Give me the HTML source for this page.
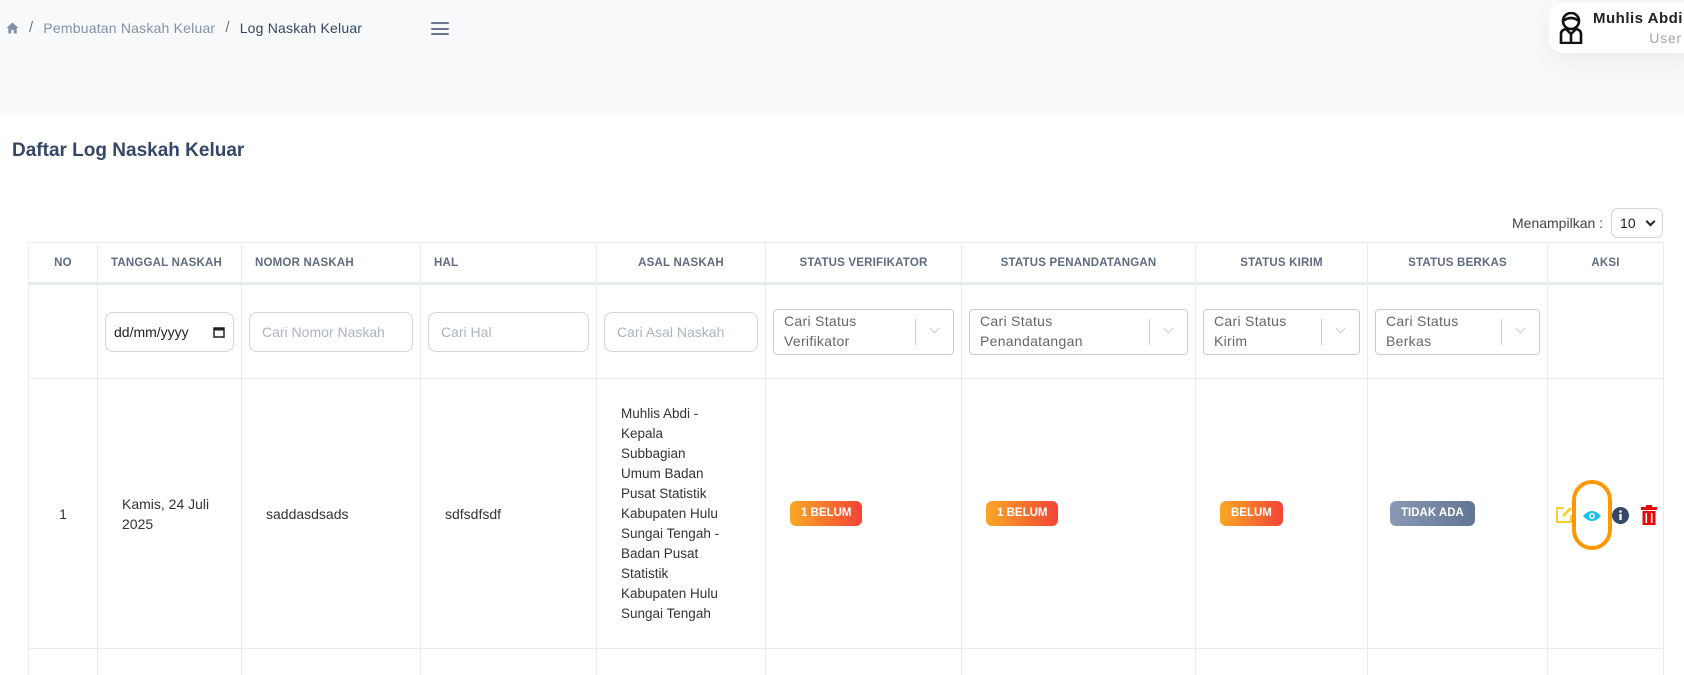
<!DOCTYPE html>
<html><head><meta charset="utf-8"><style>
*{box-sizing:border-box;margin:0;padding:0}
html,body{width:1684px;height:675px;overflow:hidden}
body{background:#fff;font-family:"Liberation Sans",sans-serif;position:relative;color:#344767}
.top{position:absolute;left:0;top:0;width:1684px;height:113px;background:#f8f9fa}
.bc{position:absolute;top:19px;left:6px;font-size:14px;color:#8392ab;display:flex;align-items:center;letter-spacing:.2px}
.bc .sep{margin:0 10px;color:#6c757d;font-size:15px}
.bc .cur{color:#344767}
.ham{position:absolute;left:431px;top:22px;width:18px}
.ham i{display:block;height:2px;background:#67748e;margin-bottom:3.5px;border-radius:1px}
.user{position:absolute;left:1549px;top:3px;width:150px;height:50px;background:#fff;border-radius:14px;box-shadow:0 8px 24px rgba(0,0,0,.06)}
.user .n{position:absolute;left:44px;top:7px;font-size:15px;font-weight:bold;color:#222;letter-spacing:.5px}
.user .r{position:absolute;right:17px;top:27px;font-size:14px;color:#a0a6b1;letter-spacing:.8px}
h2{position:absolute;left:12px;top:140px;font-size:19px;font-weight:bold;color:#344767}
.show{position:absolute;top:208px;left:1512px;font-size:14px;color:#444;display:flex;align-items:center}
.show .sel{margin-left:8px;width:52px;height:30px;border:1px solid #d2d6da;border-radius:7px;padding:6px 8px;font-size:14px;color:#222;position:relative}
.show .sel:after{content:"";position:absolute;right:8px;top:9px;width:5px;height:5px;border-right:2px solid #222;border-bottom:2px solid #222;transform:rotate(45deg)}
table{position:absolute;left:28px;top:242px;border-collapse:collapse;table-layout:fixed;width:1635px}
td,th{border:1px solid #e9ecef;vertical-align:middle}
th{height:41px;font-size:11.5px;font-weight:bold;color:#5f6b80;text-align:center;border-bottom:3px solid #e9ecef;letter-spacing:.2px}
th.l{text-align:left;padding-left:13px}
tr.f td{height:95px;padding:0 7px}
tr.d td{height:270px;font-size:14px;color:#333;padding:0 24px;line-height:20px}
.inp{height:40px;border:1px solid #d2d6da;border-radius:8px;font-size:14px;color:#adb5bd;padding:0 12px;display:flex;align-items:center}
.s{height:46px;border:1px solid #ccc;border-radius:4px;font-size:14px;color:#666;padding:1px 10px;line-height:20px;position:relative;letter-spacing:.3px}
.s:before{content:"";position:absolute;right:37px;top:9px;height:26px;border-left:1px solid #ccc}
.s:after{content:"";position:absolute;right:15px;top:15px;width:6px;height:6px;border-right:1.5px solid #ccc;border-bottom:1.5px solid #ccc;transform:rotate(45deg)}
.b{display:inline-block;padding:0 11px;height:25px;line-height:25px;border-radius:6px;color:#fff;font-size:11.5px;font-weight:bold;background:linear-gradient(90deg,#f9a825,#f44336)}
.g{background:linear-gradient(90deg,#8a99b5,#627594)}
</style></head><body>
<div class="top"></div>
<div class="bc"><svg width="13" height="12" viewBox="0 0 13 12"><path d="M6.5 0.5L0.5 6H2.3V11.5H5.2V8H7.8V11.5H10.7V6H12.5Z" fill="#8392ab"/></svg><span class="sep">/</span><span>Pembuatan Naskah Keluar</span><span class="sep">/</span><span class="cur">Log Naskah Keluar</span></div>
<div class="ham"><i></i><i></i><i></i></div>
<div class="user"><svg style="position:absolute;left:10px;top:9px" width="24" height="32" viewBox="0 0 24 32" fill="none" stroke="#111" stroke-width="2.6"><ellipse cx="12" cy="9" rx="8" ry="8"/><path d="M4 9Q12 3 20 9"/><path d="M2 31V22Q2 18 7 17L12 22L17 17Q22 18 22 22V31ZM12 22V31"/></svg><div class="n">Muhlis Abdi</div><div class="r">User</div></div>
<h2>Daftar Log Naskah Keluar</h2>
<div class="show">Menampilkan :<div class="sel">10</div></div>
<table>
<colgroup><col style="width:69px"><col style="width:144px"><col style="width:179px"><col style="width:176px"><col style="width:169px"><col style="width:196px"><col style="width:234px"><col style="width:172px"><col style="width:180px"><col style="width:116px"></colgroup>
<tr><th>NO</th><th class="l">TANGGAL NASKAH</th><th class="l">NOMOR NASKAH</th><th class="l">HAL</th><th>ASAL NASKAH</th><th>STATUS VERIFIKATOR</th><th>STATUS PENANDATANGAN</th><th>STATUS KIRIM</th><th>STATUS BERKAS</th><th>AKSI</th></tr>
<tr class="f"><td></td>
<td><div class="inp" style="color:#222;padding:0 8px;justify-content:space-between">dd/mm/yyyy<svg width="12" height="12" viewBox="0 0 12 12"><rect x="1" y="2" width="10" height="9" fill="none" stroke="#222" stroke-width="1.5"/><rect x="1" y="2" width="10" height="2.5" fill="#222"/></svg></div></td>
<td><div class="inp">Cari Nomor Naskah</div></td>
<td><div class="inp">Cari Hal</div></td>
<td><div class="inp">Cari Asal Naskah</div></td>
<td><div class="s">Cari Status<br>Verifikator</div></td>
<td><div class="s">Cari Status<br>Penandatangan</div></td>
<td><div class="s">Cari Status<br>Kirim</div></td>
<td><div class="s">Cari Status<br>Berkas</div></td>
<td></td></tr>
<tr class="d"><td style="text-align:center;padding:0">1</td><td>Kamis, 24 Juli 2025</td><td>saddasdsads</td><td>sdfsdfsdf</td><td style="font-size:13.5px">Muhlis Abdi -<br>Kepala<br>Subbagian<br>Umum Badan<br>Pusat Statistik<br>Kabupaten Hulu<br>Sungai Tengah -<br>Badan Pusat<br>Statistik<br>Kabupaten Hulu<br>Sungai Tengah</td>
<td><span class="b">1 BELUM</span></td><td><span class="b">1 BELUM</span></td><td><span class="b">BELUM</span></td><td style="padding-left:22px"><span class="b g">TIDAK ADA</span></td>
<td style="padding:0;position:relative">
<svg style="position:absolute;left:7px;top:127px" width="18" height="18" viewBox="0 0 18 18"><path d="M9 2H2V16H16V9" fill="none" stroke="#fbcf33" stroke-width="2"/><path d="M7 11L8 8L15 1L17 3L10 10Z" fill="#fbcf33"/></svg>
<div style="position:absolute;left:24px;width:40px;height:70px;border:4px solid #ff9800;border-radius:20px;top:101px"></div>
<svg style="position:absolute;left:35px;top:131px" width="18" height="12" viewBox="0 0 18 12"><path d="M0 6Q9 -4 18 6Q9 16 0 6Z" fill="#17c1e8"/><circle cx="9" cy="6" r="3" fill="#fff"/><circle cx="9" cy="6" r="1.5" fill="#17c1e8"/></svg>
<svg style="position:absolute;left:64px;top:128px" width="17" height="17" viewBox="0 0 17 17"><circle cx="8.5" cy="8.5" r="8.5" fill="#344767"/><rect x="7.3" y="7" width="2.4" height="6" fill="#fff"/><circle cx="8.5" cy="4.5" r="1.3" fill="#fff"/></svg>
<svg style="position:absolute;left:93px;top:126px" width="16" height="20" viewBox="0 0 16 20"><rect x="0" y="2" width="16" height="3" fill="#ea0606"/><rect x="5" y="0" width="6" height="3" fill="#ea0606"/><path d="M1.5 6H14.5V20H1.5Z" fill="#ea0606"/><rect x="4.5" y="8" width="1.6" height="10" fill="#fff"/><rect x="9.9" y="8" width="1.6" height="10" fill="#fff"/></svg>
</td></tr>
<tr><td style="height:40px"></td><td></td><td></td><td></td><td></td><td></td><td></td><td></td><td></td><td></td></tr>
</table>
</body></html>
